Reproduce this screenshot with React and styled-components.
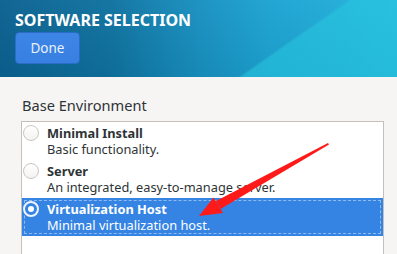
import React from "react";
import styled, { createGlobalStyle } from "styled-components";

const Global = createGlobalStyle`
  html, body { margin: 0; padding: 0; }
  body {
    width: 397px; height: 254px; overflow: hidden;
    background: #f6f5f4;
    font-family: "Noto Sans", "DejaVu Sans", sans-serif;
  }
`;

const Page = styled.div`
  position: relative;
  width: 397px;
  height: 254px;
  display: flex;
  flex-direction: column;
  overflow: hidden;
`;

const Header = styled.header`
  height: 77px;
  flex: none;
  box-sizing: border-box;
  padding: 9px 0 0 15px;
  display: flex;
  flex-direction: column;
  align-items: flex-start;
  gap: 0;
  background:
    linear-gradient(145deg, rgba(0,0,0,0) 68.5%, rgba(40,200,224,0.55) 69.5%),
    linear-gradient(180deg, rgba(255,255,255,0.03) 0%, rgba(0,0,0,0.05) 100%),
    linear-gradient(90deg, #0b6190 0%, #0f72a0 28%, #1890c0 50%, #1ca3d2 68%, #1fa8d6 80%, #22b5dc 100%);
`;

const Title = styled.h1`
  margin: 0;
  font-size: 16px;
  line-height: 22px;
  font-weight: 700;
  color: #ffffff;
  letter-spacing: 0;
`;

const DoneButton = styled.button`
  width: 65px;
  height: 32px;
  box-sizing: border-box;
  border: 1px solid #2a6cc6;
  border-radius: 4px;
  background: linear-gradient(180deg, #3d86e6 0%, #3780e2 100%);
  color: #e9f1fc;
  font-family: "Noto Sans", "DejaVu Sans", sans-serif;
  font-size: 13.5px;
  padding: 0;
  margin-top: 1px;
`;

const Body = styled.main`
  flex: 1;
  box-sizing: border-box;
  padding: 18px 13px 0 21px;
  display: flex;
  flex-direction: column;
`;

const SectionLabel = styled.div`
  font-size: 14.6px;
  line-height: 20px;
  color: #2e3436;
  margin-left: 1px;
  margin-bottom: 6px;
`;

const List = styled.div`
  flex: 1;
  min-height: 200px;
  background: #ffffff;
  border: 1px solid #c4c1bd;
  border-bottom: none;
  display: flex;
  flex-direction: column;
`;

const Row = styled.div`
  height: 38px;
  box-sizing: border-box;
  padding: 3px 0 3px 1px;
  display: flex;
  align-items: flex-start;
  gap: 8px;
  background: ${(p) => (p.$selected ? "#3584e4" : "transparent")};
  color: ${(p) => (p.$selected ? "#ffffff" : "#2e3436")};
  outline: ${(p) => (p.$selected ? "1px dashed rgba(255,255,255,0.45)" : "none")};
  outline-offset: -3px;
`;

const Radio = styled.span`
  flex: none;
  width: 16px;
  height: 16px;
  box-sizing: border-box;
  margin-top: 0px;
  border-radius: 50%;
  display: flex;
  align-items: center;
  justify-content: center;
  border: ${(p) => (p.$checked ? "2px solid #eef4fd" : "1px solid #c9c6c2")};
  background: ${(p) =>
    p.$checked ? "#3584e4" : "linear-gradient(180deg, #ffffff 0%, #f4f3f2 100%)"};
  &::after {
    content: "";
    display: ${(p) => (p.$checked ? "block" : "none")};
    width: 6px;
    height: 6px;
    border-radius: 50%;
    background: #ffffff;
  }
`;

const RowText = styled.div`
  display: flex;
  flex-direction: column;
  font-size: 12.8px;
  line-height: 16px;
`;

const RowTitle = styled.span`
  font-weight: 700;
`;

const RowDesc = styled.span`
  font-weight: 400;
`;

const Arrow = styled.svg`
  position: absolute;
  left: 0;
  top: 0;
  pointer-events: none;
`;

const items = [
  { title: "Minimal Install", desc: "Basic functionality." },
  { title: "Server", desc: "An integrated, easy-to-manage server." },
  { title: "Virtualization Host", desc: "Minimal virtualization host.", selected: true },
];

export default function App() {
  return (
    <Page>
      <Global />
      <Header>
        <Title>SOFTWARE SELECTION</Title>
        <DoneButton>Done</DoneButton>
      </Header>
      <Body>
        <SectionLabel>Base Environment</SectionLabel>
        <List>
          {items.map((it) => (
            <Row key={it.title} $selected={it.selected}>
              <Radio $checked={it.selected} />
              <RowText>
                <RowTitle>{it.title}</RowTitle>
                <RowDesc>{it.desc}</RowDesc>
              </RowText>
            </Row>
          ))}
        </List>
      </Body>
      <Arrow width="397" height="254" viewBox="0 0 397 254">
        <polygon points="328,143 329,144.5 220.5,209 216,201" fill="#ff1a1a" />
        <polygon points="199,216 213.5,197.5 223,213" fill="#ff1a1a" />
      </Arrow>
    </Page>
  );
}
